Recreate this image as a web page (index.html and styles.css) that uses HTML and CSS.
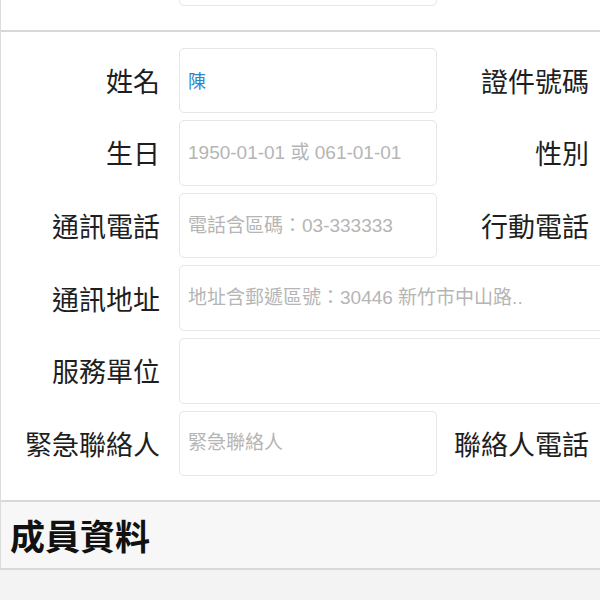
FILE: index.html
```html
<!DOCTYPE html>
<html lang="zh-Hant">
<head>
<meta charset="utf-8">
<title>基本資料</title>
<link rel="stylesheet" href="styles.css">
</head>
<body>
<div class="page">
  <div class="section top">
    <div class="row">
      <span class="label"></span>
      <input class="field" type="text">
      <span class="label-r"></span>
    </div>
  </div>
  <div class="section form">
    <div class="row">
      <label class="label">姓名</label>
      <input class="field value" type="text" value="陳">
      <label class="label-r">證件號碼</label>
    </div>
    <div class="row">
      <label class="label">生日</label>
      <input class="field" type="text" placeholder="1950-01-01 或 061-01-01">
      <label class="label-r">性別</label>
    </div>
    <div class="row">
      <label class="label">通訊電話</label>
      <input class="field" type="text" placeholder="電話含區碼：03-333333">
      <label class="label-r">行動電話</label>
    </div>
    <div class="row">
      <label class="label">通訊地址</label>
      <input class="field wide" type="text" placeholder="地址含郵遞區號：30446 新竹市中山路..">
    </div>
    <div class="row">
      <label class="label">服務單位</label>
      <input class="field wide" type="text">
    </div>
    <div class="row">
      <label class="label">緊急聯絡人</label>
      <input class="field" type="text" placeholder="緊急聯絡人">
      <label class="label-r">聯絡人電話</label>
    </div>
  </div>
  <div class="section heading">
    <h2 class="title">成員資料</h2>
  </div>
</div>
</body>
</html>
```

FILE: styles.css
```css
html, body {
  margin: 0;
  padding: 0;
  background: #f3f3f3;
  font-family: "Liberation Sans", "Noto Sans CJK TC", sans-serif;
  color: #222;
}

.page {
  width: 600px;
  overflow: hidden;
  border-left: 1px solid #dcdcdc;
  box-sizing: border-box;
}

.section {
  background: #fff;
  border-bottom: 2px solid #d8d8d8;
}

.top {
  display: grid;
  padding-bottom: 24px;
}

.top .row {
  margin-top: -60px;
}

.form {
  display: grid;
  row-gap: 7px;
  padding-top: 16px;
  padding-bottom: 23.5px;
}

.row {
  display: grid;
  grid-template-columns: 178px 258px minmax(0, 1fr);
  align-items: center;
}

.label, .label-r {
  font-family: "Noto Sans CJK TC", sans-serif;
  font-size: 27px;
  line-height: 1;
  color: #1e1e1e;
  text-align: right;
  white-space: nowrap;
}

.label {
  padding-right: 19px;
}

.label-r {
  padding-right: 11px;
}

.field {
  box-sizing: border-box;
  height: 65.6px;
  width: 258px;
  margin: 0;
  padding: 0 0 0 8px;
  border: 1px solid #e6e6e6;
  border-radius: 5px;
  background: #fff;
  font-family: "Liberation Sans", "Noto Sans CJK TC", sans-serif;
  font-size: 19px;
  color: #2f86c4;
  outline: none;
}

.field.value {
  font-size: 18px;
}

.field::placeholder {
  color: #b5b5b5;
}

.field.wide {
  grid-column: 2 / 4;
  width: auto;
  justify-self: stretch;
  margin-right: -24px;
}

.heading {
  background: #f7f7f7;
  height: 66px;
  display: flex;
  align-items: center;
}

.title {
  margin: 0 0 0 9px;
  font-family: "Noto Sans CJK TC", sans-serif;
  font-size: 35px;
  font-weight: 700;
  line-height: 1;
  color: #111;
}
```
